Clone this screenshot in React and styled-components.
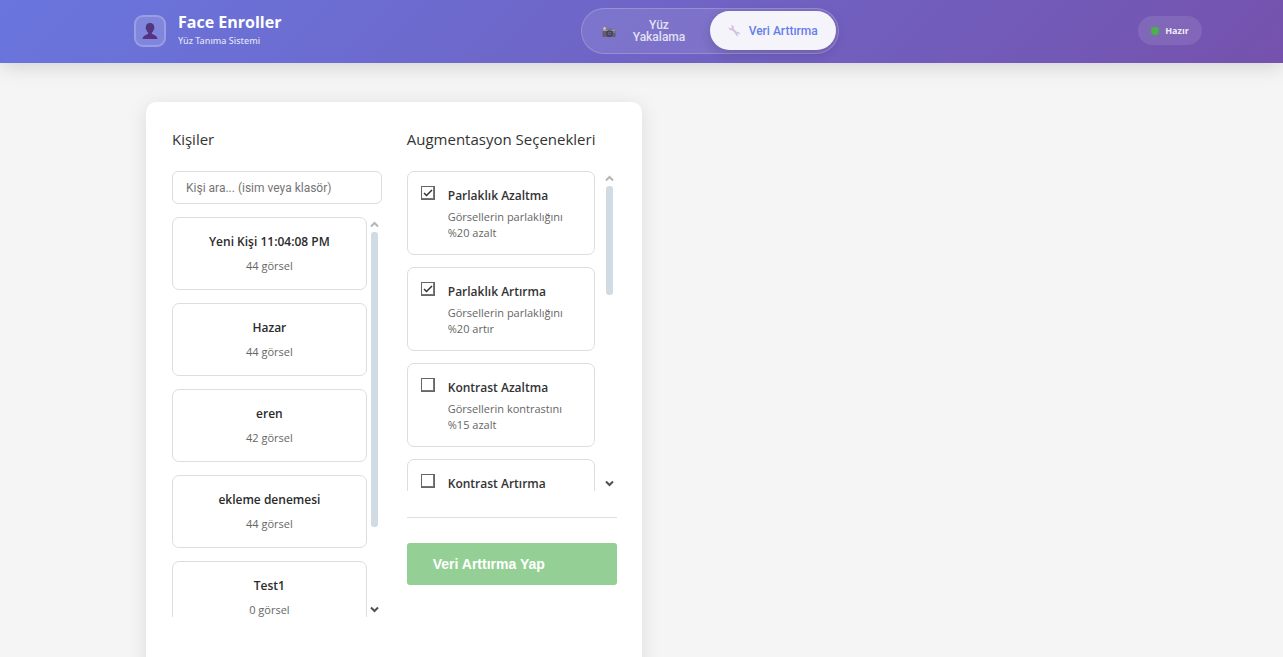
import React, { useState } from 'react';
import styled, { createGlobalStyle } from 'styled-components';

const uiFont = '"Open Sans", "Noto Sans", sans-serif';
const controlFont = 'Roboto, "Liberation Sans", Arial, sans-serif';
const actionFont = '"Liberation Sans", Arial, sans-serif';

const GlobalStyle = createGlobalStyle`
  *, *::before, *::after { box-sizing: border-box; }
  body {
    margin: 0;
    background: #f5f5f5;
    color: #333;
    font-family: ${uiFont};
  }
  h1, h2, p, ul { margin: 0; padding: 0; }
  ul { list-style: none; }
`;

const Page = styled.div`
  height: 100vh;
  display: flex;
  flex-direction: column;
  overflow: hidden;
`;

const Header = styled.header`
  flex: none;
  display: flex;
  align-items: center;
  justify-content: space-between;
  min-height: 63px;
  padding: 0 81px 2px 134px;
  background: linear-gradient(135deg, #6976de 0%, #7552ad 100%);
  box-shadow: 0 3px 20px rgba(0, 0, 0, 0.15);
`;

const Brand = styled.div`
  display: flex;
  align-items: center;
  gap: 12px;
`;

const Logo = styled.div`
  display: grid;
  place-items: center;
  width: 32px;
  height: 32px;
  border: 2px solid rgba(255, 255, 255, 0.2);
  border-radius: 9px;
  background: rgba(255, 255, 255, 0.15);
`;

const BrandName = styled.h1`
  color: #fff;
  font-size: 16px;
  font-weight: 700;
  line-height: 20px;
`;

const BrandNote = styled.p`
  color: rgba(255, 255, 255, 0.8);
  font-family: "Noto Sans", sans-serif;
  font-size: 9px;
  font-weight: 500;
  line-height: 18px;
`;

const Nav = styled.nav`
  display: flex;
  align-items: center;
  justify-content: space-between;
  width: 258px;
  height: 46px;
  padding: 2px;
  border: 1px solid rgba(255, 255, 255, 0.2);
  border-radius: 23px;
  background: rgba(255, 255, 255, 0.1);
`;

const NavButton = styled.button`
  display: flex;
  align-items: center;
  gap: ${(p) => (p.$active ? '8px' : '17px')};
  width: 126px;
  height: 39px;
  padding: 0 0 0 18px;
  border: 0;
  border-radius: 20px;
  background: ${(p) => (p.$active ? 'rgba(255, 255, 255, 0.92)' : 'transparent')};
  box-shadow: ${(p) => (p.$active ? '0 3px 12px rgba(0, 0, 0, 0.16)' : 'none')};
  color: ${(p) => (p.$active ? '#667eea' : 'rgba(255, 255, 255, 0.8)')};
  font-family: ${controlFont};
  font-size: 12px;
  font-weight: 500;
  line-height: 12px;
  cursor: pointer;
`;

const Status = styled.div`
  display: flex;
  align-items: center;
  justify-content: center;
  gap: 6px;
  min-width: 64px;
  height: 29px;
  padding: 0 12px;
  border-radius: 15px;
  background: rgba(255, 255, 255, 0.1);
  color: rgba(255, 255, 255, 0.9);
  font-size: 9px;
  font-weight: 700;
`;

const StatusDot = styled.span`
  width: 8px;
  height: 8px;
  border-radius: 50%;
  background: #4caf50;
  box-shadow: 0 0 8px rgba(76, 175, 80, 0.4);
`;

const Main = styled.main`
  flex: 1;
  display: grid;
  grid-template-columns: 1fr 1fr;
  width: 100%;
  max-width: 991px;
  margin: 0 auto;
  padding-top: 39px;
`;

const Card = styled.section`
  display: grid;
  grid-template-columns: 1fr 1fr;
  align-content: start;
  gap: 25px;
  min-height: 640px;
  padding: 25px 25px 26px 26px;
  border-radius: 10px;
  background: #fff;
  box-shadow: 0 3px 20px rgba(0, 0, 0, 0.1);
`;

const Column = styled.div`
  min-width: 0;
`;

const Heading = styled.h2`
  margin-bottom: 20px;
  font-size: 15px;
  font-weight: 500;
  line-height: 24px;
`;

const Search = styled.input`
  display: block;
  width: 100%;
  height: 33px;
  margin-bottom: 13px;
  padding: 0 13px;
  border: 1px solid #ddd;
  border-radius: 6px;
  background: #fff;
  font-family: ${controlFont};
  font-size: 12px;
  &::placeholder { color: #757575; opacity: 1; }
`;

const ScrollArea = styled.div`
  display: flex;
  gap: ${(p) => p.$gap}px;
  height: ${(p) => p.$height}px;
  padding-right: 4px;
`;

const List = styled.ul`
  flex: 1;
  display: flex;
  flex-direction: column;
  gap: ${(p) => p.$gap}px;
  min-width: 0;
  overflow-y: auto;
  scrollbar-width: none;
`;

const Rail = styled.div`
  display: flex;
  flex-direction: column;
  align-items: center;
  width: 7px;
  padding: 4px 0;
`;

const Thumb = styled.div`
  width: 7px;
  height: ${(p) => p.$height}px;
  margin: 4px 0 auto;
  border-radius: 3px;
  background: #d0dbe3;
`;

const PersonButton = styled.button`
  display: flex;
  flex-direction: column;
  align-items: center;
  gap: 6px;
  width: 100%;
  height: 73px;
  padding: 14px 12px;
  border: 1px solid #ddd;
  border-radius: 7px;
  background: #fff;
  color: #2b2b2b;
  font-family: ${uiFont};
  cursor: pointer;
`;

const PersonName = styled.span`
  font-size: 12px;
  font-weight: 600;
  line-height: 20px;
`;

const PersonCount = styled.span`
  color: #666;
  font-size: 11px;
  line-height: 16px;
`;

const OptionCard = styled.label`
  display: flex;
  align-items: flex-start;
  gap: 13px;
  height: 84px;
  padding: 14px 13px;
  border: 1px solid #ddd;
  border-radius: 7px;
  cursor: pointer;
`;

const CheckWrap = styled.span`
  display: grid;
  width: 14px;
  height: 14px;
  > * { grid-area: 1 / 1; }
  > svg { pointer-events: none; }
`;

const Checkbox = styled.input`
  appearance: none;
  width: 14px;
  height: 14px;
  margin: 0;
  border: 1px solid #666;
  box-shadow: inset -1px -1px 0 #777;
  background: #fff;
`;

const OptionText = styled.span`
  display: flex;
  flex-direction: column;
  gap: 3px;
`;

const OptionName = styled.span`
  font-size: 12px;
  font-weight: 600;
  line-height: 20px;
`;

const OptionNote = styled.span`
  color: #666;
  font-size: 11px;
  line-height: 16px;
`;

const Actions = styled.div`
  margin-top: 26px;
  padding-top: 25px;
  border-top: 1px solid #ddd;
`;

const RunButton = styled.button`
  width: 100%;
  height: 42px;
  padding: 0 26px;
  border: 0;
  border-radius: 3px;
  background: #94d096;
  color: #fff;
  font-family: ${actionFont};
  font-size: 14px;
  font-weight: 700;
  text-align: left;
`;

const PersonIcon = () => (
  <svg width="16" height="18" viewBox="0 0 16 18" aria-hidden="true">
    <defs>
      <linearGradient id="bust" x1="0" x2="1" y1="0" y2="1">
        <stop offset="0" stopColor="#4b3a78" />
        <stop offset="1" stopColor="#5c2f86" />
      </linearGradient>
    </defs>
    <path
      fill="url(#bust)"
      d="M8 1C5.200 1 3.700 2.700 3.900 5.200c-.6.500-.3 2 .4 2.300.3 1.500 1 2.500 1.900 3.200v1C5.600 12.600 1 12.800.5 17h15c-.5-4.200-5.100-4.400-5.700-5.300v-1c.9-.7 1.600-1.700 1.900-3.200.7-.3 1-1.800.4-2.300C12.300 2.700 10.800 1 8 1z"
    />
  </svg>
);

const CameraIcon = () => (
  <svg width="14" height="14" viewBox="0 0 14 14" aria-hidden="true">
    <path d="M.5 5.500h13V13H.5z" fill="#625d70" />
    <path d="M.5 5.500h13V7H.5z" fill="#9b95a8" />
    <path d="M5 4.500h5l1 1.500H4.300z" fill="#77718b" />
    <path d="M1 5.500 2 3l1.500.5.500 2z" fill="#f3cf8c" />
    <circle cx="7.500" cy="9.500" r="3.200" fill="#403c50" />
    <circle cx="7.500" cy="9.500" r="2" fill="#6d6790" />
    <circle cx="7.500" cy="9.500" r="1" fill="#454060" />
    <path d="M11.500 7.500h1.300v1h-1.300z" fill="#b8b3c8" />
  </svg>
);

const WrenchIcon = () => (
  <svg width="13" height="13" viewBox="0 0 13 13" aria-hidden="true">
    <path
      fill="#d2c2da"
      d="M2.800.9 4.900 1.400 6 3.300 5.500 4.800 9 8.100c1.400-.4 2.700.3 3 1.700l-.1 1-1.500-1.200-1 .3-.2 1 1.500 1.200c-1.500.6-3.200-.4-3.100-2L4.300 6.300c-1.500.4-3.200-.4-3.500-2L.9 3l1.600 1.500 1.300-.4.3-1.200z"
    />
  </svg>
);

const Arrow = ({ down }) => (
  <svg width="9" height="7" viewBox="0 0 9 7" aria-hidden="true">
    <path
      d={down ? 'M1 1.500 4.500 5 8 1.500' : 'M1 5.500 4.500 2 8 5.500'}
      fill="none"
      stroke={down ? '#505050' : '#b5b5b5'}
      strokeWidth="2"
    />
  </svg>
);

const people = [
  ['Yeni Kişi 11:04:08 PM', 44],
  ['Hazar', 44],
  ['eren', 42],
  ['ekleme denemesi', 44],
  ['Test1', 0],
];

const options = [
  ['Parlaklık Azaltma', 'Görsellerin parlaklığını', '%20 azalt', true],
  ['Parlaklık Artırma', 'Görsellerin parlaklığını', '%20 artır', true],
  ['Kontrast Azaltma', 'Görsellerin kontrastını', '%15 azalt', false],
  ['Kontrast Artırma', 'Görsellerin kontrastını', '%15 artır', false],
];

function Option({ name, note, amount, initial }) {
  const [checked, setChecked] = useState(initial);
  return (
    <OptionCard>
      <CheckWrap>
        <Checkbox type="checkbox" checked={checked} onChange={(e) => setChecked(e.target.checked)} />
        {checked && (
          <svg width="14" height="14" viewBox="0 0 14 14" aria-hidden="true">
            <path d="M3 7 5.500 9.500 11 4" fill="none" stroke="#333" strokeWidth="1.500" />
          </svg>
        )}
      </CheckWrap>
      <OptionText>
        <OptionName>{name}</OptionName>
        <OptionNote>
          {note}
          <br />
          {amount}
        </OptionNote>
      </OptionText>
    </OptionCard>
  );
}

function Scroller({ height, gap, itemGap, thumb, children }) {
  return (
    <ScrollArea $height={height} $gap={gap}>
      <List $gap={itemGap}>{children}</List>
      <Rail>
        <Arrow />
        <Thumb $height={thumb} />
        <Arrow down />
      </Rail>
    </ScrollArea>
  );
}

export default function App() {
  return (
    <Page>
      <GlobalStyle />
      <Header>
        <Brand>
          <Logo>
            <PersonIcon />
          </Logo>
          <div>
            <BrandName>Face Enroller</BrandName>
            <BrandNote>Yüz Tanıma Sistemi</BrandNote>
          </div>
        </Brand>
        <Nav>
          <NavButton type="button">
            <CameraIcon />
            <span>
              Yüz
              <br />
              Yakalama
            </span>
          </NavButton>
          <NavButton type="button" $active>
            <WrenchIcon />
            <span>Veri Arttırma</span>
          </NavButton>
        </Nav>
        <Status>
          <StatusDot />
          Hazır
        </Status>
      </Header>
      <Main>
        <Card>
          <Column>
            <Heading>Kişiler</Heading>
            <Search type="text" aria-label="Kişi ara" placeholder="Kişi ara... (isim veya klasör)" />
            <Scroller height={400} gap={4} itemGap={13} thumb={295}>
              {people.map(([name, count]) => (
                <li key={name}>
                  <PersonButton type="button">
                    <PersonName>{name}</PersonName>
                    <PersonCount>{count} görsel</PersonCount>
                  </PersonButton>
                </li>
              ))}
            </Scroller>
          </Column>
          <Column>
            <Heading>Augmentasyon Seçenekleri</Heading>
            <Scroller height={320} gap={11} itemGap={12} thumb={109}>
              {options.map(([name, note, amount, initial]) => (
                <li key={name}>
                  <Option name={name} note={note} amount={amount} initial={initial} />
                </li>
              ))}
            </Scroller>
            <Actions>
              <RunButton type="button">Veri Arttırma Yap</RunButton>
            </Actions>
          </Column>
        </Card>
      </Main>
    </Page>
  );
}
